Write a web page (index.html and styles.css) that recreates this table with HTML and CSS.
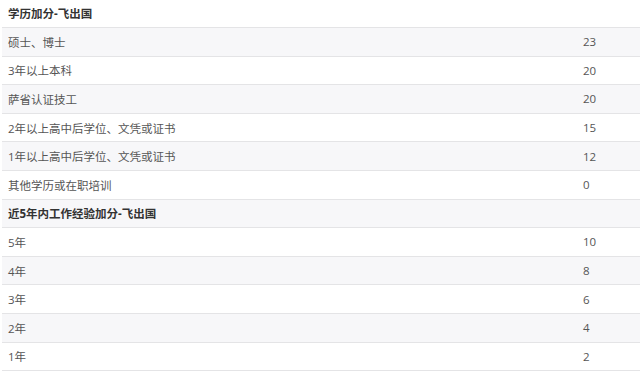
FILE: index.html
```html
<!DOCTYPE html>
<html lang="zh">
<head>
<meta charset="utf-8">
<link rel="stylesheet" href="styles.css">
</head>
<body>
<div class="table">
  <div class="row head"><div class="c1">学历加分-飞出国</div><div class="c2"></div></div>
  <div class="row alt"><div class="c1">硕士、博士</div><div class="c2">23</div></div>
  <div class="row"><div class="c1">3年以上本科</div><div class="c2">20</div></div>
  <div class="row alt"><div class="c1">萨省认证技工</div><div class="c2">20</div></div>
  <div class="row"><div class="c1">2年以上高中后学位、文凭或证书</div><div class="c2">15</div></div>
  <div class="row alt"><div class="c1">1年以上高中后学位、文凭或证书</div><div class="c2">12</div></div>
  <div class="row"><div class="c1">其他学历或在职培训</div><div class="c2">0</div></div>
  <div class="row head alt"><div class="c1">近5年内工作经验加分-飞出国</div><div class="c2"></div></div>
  <div class="row"><div class="c1">5年</div><div class="c2">10</div></div>
  <div class="row alt"><div class="c1">4年</div><div class="c2">8</div></div>
  <div class="row"><div class="c1">3年</div><div class="c2">6</div></div>
  <div class="row alt"><div class="c1">2年</div><div class="c2">4</div></div>
  <div class="row"><div class="c1">1年</div><div class="c2">2</div></div>
</div>
</body>
</html>
```

FILE: styles.css
```css
html, body {
  margin: 0;
  padding: 0;
  background: #ffffff;
}
body {
  font-family: "Open Sans", "Noto Sans CJK SC", sans-serif;
  font-size: 11.5px;
  color: #555555;
  overflow: hidden;
}
.table {
  margin: -0.6px 0 0 2px;
  width: 638px;
}
.row {
  display: grid;
  grid-template-columns: 1fr 63px;
  align-items: center;
  height: 27.6px;
  border-bottom: 1px solid #e4e4e6;
  background: #ffffff;
}
.row.alt {
  background: #f7f7f9;
}
.c1 {
  padding-left: 6px;
  white-space: nowrap;
}
.c2 {
  padding-left: 6px;
}
.head .c1 {
  font-weight: bold;
  color: #333333;
}
```
